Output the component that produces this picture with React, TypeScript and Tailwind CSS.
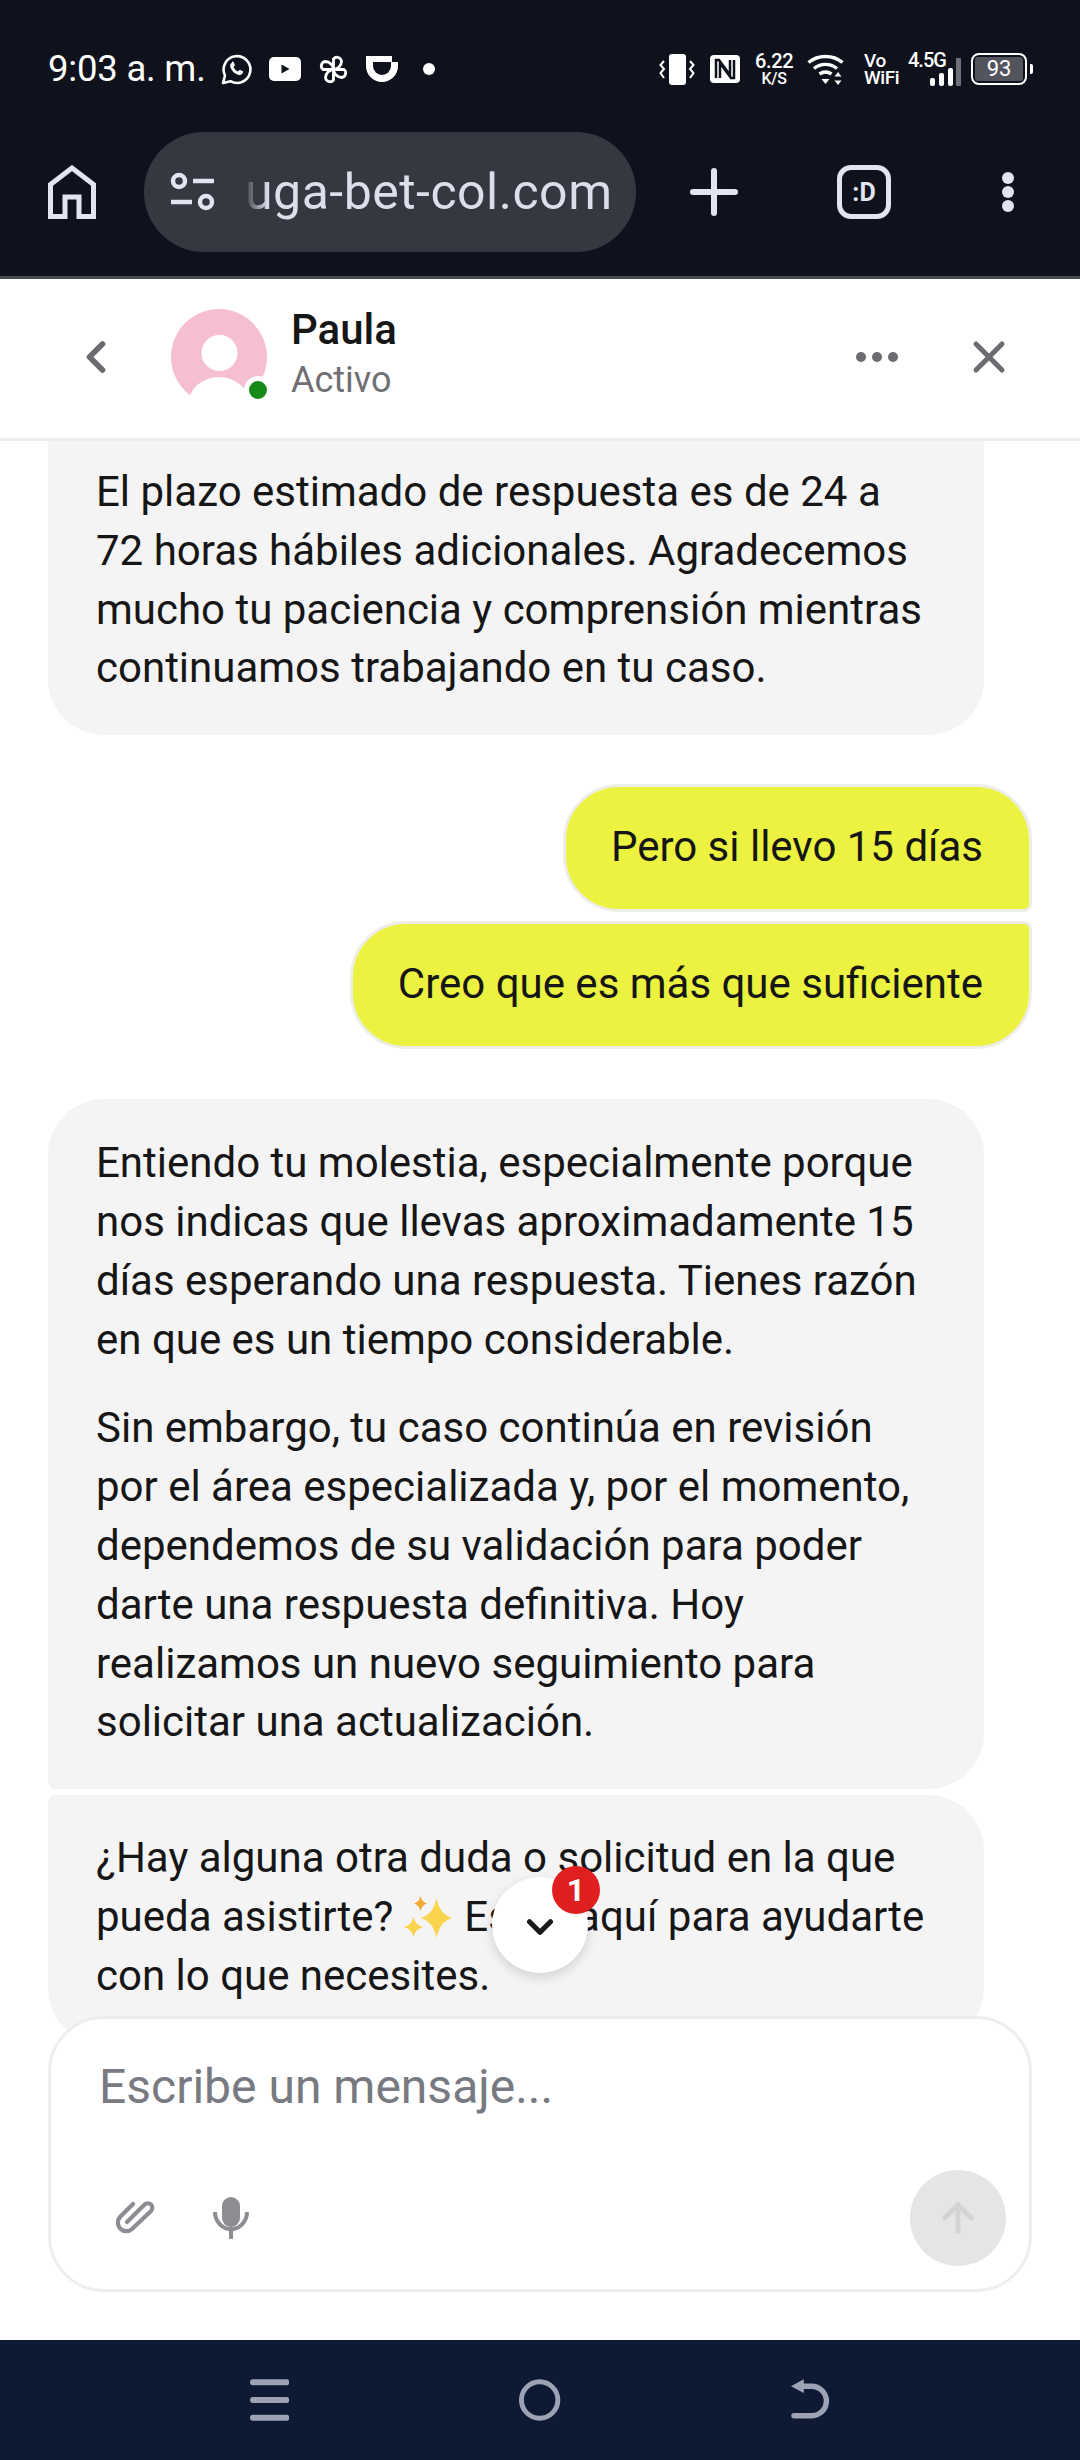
import { X, ChevronLeft, ChevronDown, ArrowUp } from 'lucide-react';

const roboto = "font-['Roboto',sans-serif]";

function WhatsAppIcon() {
  return (
    <svg width="31" height="31" viewBox="0 0 31 31" fill="none" className="text-white">
      <path d="M2 29l2-7.500A13.400 13.400 0 1 1 9.400 27.200L2 29z" stroke="currentColor" strokeWidth="2.600" strokeLinejoin="round" />
      <path d="M11 8.500c-1.500 1-2.300 2.800-1.500 5 1.200 3.300 4 6 7.300 7.200 2.300.8 4 0 5-1.600l.4-1.600-3.500-1.800-1.700 1.700c-2-.8-3.600-2.400-4.500-4.400l1.500-1.700-1.600-3.500-1.400-.3z" fill="currentColor" />
    </svg>
  );
}

function YoutubeIcon() {
  return (
    <svg width="32" height="24" viewBox="0 0 32 24">
      <rect width="32" height="24" rx="5" fill="white" />
      <path d="M12.500 7.500v9l8-4.500z" fill="#0f121c" />
    </svg>
  );
}

function PinwheelIcon() {
  return (
    <svg width="31" height="31" viewBox="0 0 31 31" fill="none" stroke="white" strokeWidth="2.800" strokeLinejoin="round">
      <path d="M15.500 15.500V5a4.500 4.500 0 0 1 8 2.500c0 4-4 8-8 8z" />
      <path d="M15.500 15.500H26a4.500 4.500 0 0 1-2.500 8c-4 0-8-4-8-8z" />
      <path d="M15.500 15.500V26a4.500 4.500 0 0 1-8-2.500c0-4 4-8 8-8z" />
      <path d="M15.500 15.500H5a4.500 4.500 0 0 1 2.500-8c4 0 8 4 8 8z" />
    </svg>
  );
}

function CupIcon() {
  return (
    <svg width="32" height="26" viewBox="0 0 32 26">
      <path d="M0 0H26V6H32V10A16 16 0 0 1 0 10Z" fill="white" />
      <path d="M7 6H25V10A9 9 0 0 1 7 10Z" fill="#0f121c" />
    </svg>
  );
}

function VibrateIcon() {
  return (
    <svg width="36" height="31" viewBox="0 0 36 31" fill="none">
      <rect x="10" y="0" width="17" height="31" rx="3" fill="white" />
      <path d="M5 7L1.500 11 5 15 1.500 19 5 24" stroke="white" strokeWidth="2" />
      <path d="M31 7l3.500 4L31 15l3.500 4L31 24" stroke="white" strokeWidth="2" />
    </svg>
  );
}

function NfcIcon() {
  return (
    <svg width="30" height="28" viewBox="0 0 30 28">
      <rect width="30" height="28" rx="4" fill="white" />
      <path d="M6 23V5h3l11 15V5M24 5v18h-3L10 8v15" fill="none" stroke="#0f121c" strokeWidth="2.500" />
    </svg>
  );
}

function WifiIcon() {
  return (
    <svg width="38" height="32" viewBox="0 0 38 32" fill="none" stroke="white" strokeWidth="3.400">
      <path d="M1.500 9.500C11 1.500 26 1.500 35.500 9.500" />
      <path d="M7 15.500c7-5.500 16-5.500 23 0" />
      <path d="M12.500 21c4-2.800 8-2.800 12 0" />
      <path d="M14.500 26h8L18.500 31z" fill="white" stroke="none" />
      <path d="M31 19l3.500 4.500h-7zM31 32l3.500-4.500h-7z" fill="white" stroke="none" />
    </svg>
  );
}

function SignalBars() {
  return (
    <svg width="31" height="28" viewBox="0 0 31 28" fill="white">
      <rect x="0" y="20" width="5" height="8" rx="2" />
      <rect x="9" y="15" width="5" height="13" rx="2" />
      <rect x="18" y="10" width="5" height="18" rx="2" />
      <rect x="26" y="0" width="5" height="28" rx="1" fill="#6f717a" />
    </svg>
  );
}

function StatusBar() {
  return (
    <div className={`h-[132px] flex items-start justify-between pt-[51px] pl-[48px] pr-[47px] text-white ${roboto}`}>
      <div className="flex items-center h-[36px]">
        <span className="text-[36.500px] leading-[36px] tracking-[-0.2px]">9:03 a. m.</span>
        <div className="flex items-center ml-[15px] gap-[17px]">
          <WhatsAppIcon />
          <YoutubeIcon />
          <PinwheelIcon />
          <CupIcon />
          <span className="w-[12px] h-[12px] rounded-full bg-white ml-[8px]" />
        </div>
      </div>
      <div className="flex items-center h-[36px]">
        <VibrateIcon />
        <div className="ml-[15px]"><NfcIcon /></div>
        <div className="ml-[14px] w-[40px] flex flex-col items-center font-medium">
          <span className="text-[20px] leading-[19px] tracking-[-0.3px]">6.22</span>
          <span className="text-[16px] leading-[15px] tracking-[-0.2px]">K/S</span>
        </div>
        <div className="ml-[13px]"><WifiIcon /></div>
        <div className="ml-[19px] flex flex-col font-medium">
          <span className="text-[19px] leading-[17px] tracking-[-0.5px]">Vo</span>
          <span className="text-[19px] leading-[17px] tracking-[-0.5px]">WiFi</span>
        </div>
        <div className="ml-[9px] relative w-[63px] h-[34px]">
          <span className="absolute left-0 top-[-2px] text-[20px] leading-[20px] font-medium tracking-[-1px]">4.5G</span>
          <div className="absolute right-[10px] bottom-0"><SignalBars /></div>
        </div>
        <div className="flex items-center">
          <div className="w-[56px] h-[32px] rounded-[8px] border-2 border-white p-[2px]">
            <div className="w-full h-full bg-[#53555e] rounded-[3px] flex items-center justify-center text-[22px] leading-none">93</div>
          </div>
          <div className="w-[3px] h-[10px] bg-white ml-[3px] rounded-r-[2px]" />
        </div>
      </div>
    </div>
  );
}

function BrowserBar() {
  return (
    <div className="h-[147px] bg-[#0f121c] border-b-[3px] border-[#4a4c55] flex items-start pl-[48px] relative">
      <svg width="48" height="54" viewBox="0 0 48 54" fill="none" className="mt-[33px]" stroke="#e2e4f0" strokeWidth="5">
        <path d="M2.500 51.500V19.500L24 3 45.500 19.500V51.500H31V32H17V51.500z" />
      </svg>
      <div className={`ml-[48px] w-[492px] h-[120px] rounded-full bg-[#353741] flex items-center relative ${roboto}`}>
        <svg width="46" height="40" viewBox="0 0 46 40" fill="none" className="ml-[26px]" stroke="#e2e4f0" strokeWidth="4.500">
          <circle cx="9" cy="9" r="6" />
          <path d="M23 9h21" />
          <path d="M1 30h21" />
          <circle cx="36" cy="30" r="6" />
        </svg>
        <span className="ml-[29px] text-[50px] leading-none text-[#dcdee9] tracking-[0.5px] whitespace-nowrap">uga-bet-col.com</span>
        <div className="absolute left-[100px] top-[30px] h-[60px] w-[24px] bg-gradient-to-r from-[#353741] to-transparent" />
      </div>
      <svg width="48" height="48" viewBox="0 0 48 48" className="mt-[36px] ml-[54px]" stroke="#e2e4f0" strokeWidth="6" strokeLinecap="round">
        <path d="M24 3v42M3 24h42" />
      </svg>
      <div className={`mt-[33px] ml-[99px] w-[54px] h-[54px] rounded-[14px] border-[5px] border-[#e2e4f0] flex items-center justify-center text-[#e2e4f0] text-[25px] font-bold leading-none ${roboto}`}>
        :D
      </div>
      <div className="mt-[40px] ml-[111px] flex flex-col gap-[2px]">
        <span className="w-[12px] h-[12px] rounded-full bg-[#e2e4f0]" />
        <span className="w-[12px] h-[12px] rounded-full bg-[#e2e4f0]" />
        <span className="w-[12px] h-[12px] rounded-full bg-[#e2e4f0]" />
      </div>
    </div>
  );
}

function Avatar() {
  return (
    <div className="relative w-[96px] h-[96px]">
      <svg width="96" height="96" viewBox="0 0 96 96">
        <circle cx="48" cy="48" r="48" fill="#f5bfcf" />
        <circle cx="48.500" cy="44" r="18" fill="white" />
        <ellipse cx="48" cy="96" rx="31" ry="28" fill="white" />
      </svg>
      <span className="absolute left-[73px] top-[67px] w-[28px] h-[28px] rounded-full bg-[#168a17] border-[5px] border-white" />
    </div>
  );
}

function Header() {
  return (
    <div className={`h-[162px] bg-white border-b-[3px] border-[#eeeeee] flex items-center relative z-20 pl-[70px] pr-[65px] pb-[3px] ${roboto}`}>
      <ChevronLeft size={52} strokeWidth={2.600} className="text-[#6b6b70]" />
      <div className="ml-[49px]"><Avatar /></div>
      <div className="ml-[24px] mb-[4px] flex flex-col">
        <span className="text-[42px] leading-[50px] font-medium text-[#161616]">Paula</span>
        <span className="text-[36px] leading-[50px] text-[#6f6f74]">Activo</span>
      </div>
      <div className="ml-auto flex items-center gap-[6px]">
        <span className="w-[10px] h-[10px] rounded-full bg-[#6b6b70]" />
        <span className="w-[10px] h-[10px] rounded-full bg-[#6b6b70]" />
        <span className="w-[10px] h-[10px] rounded-full bg-[#6b6b70]" />
      </div>
      <X size={52} strokeWidth={2.300} className="text-[#6b6b70] ml-[65px]" />
    </div>
  );
}

function Sparkles() {
  return (
    <svg width="48" height="44" viewBox="0 0 48 44" className="inline-block align-[-7px] mr-[2px]">
      <path d="M32.500 4Q35.500 20 48 24Q35.500 28 32.500 44Q29.500 28 17 24Q29.500 20 32.500 4z" fill="#fbd44e" />
      <path d="M16.500 2Q17.800 8 23 9.500Q17.800 11 16.500 17Q15.200 11 10 9.500Q15.200 8 16.500 2z" fill="#f2ab2e" />
      <path d="M9.500 23Q11.400 31 19 33Q11.400 35 9.500 43Q7.600 35 0 33Q7.600 31 9.500 23z" fill="#fbd44e" />
    </svg>
  );
}

function UserBubble({ text, corner }: { text: string; corner: string }) {
  return (
    <div className={`self-end h-[128px] flex items-center pl-[45px] pr-[46px] pb-[2px] bg-[#ebf240] border-[3px] border-[#eeeee6] text-[#161616] rounded-[56px] ${corner}`}>
      {text}
    </div>
  );
}

function Messages() {
  return (
    <div className="h-[1640px] overflow-hidden flex flex-col px-[48px] text-[42px] leading-[58.8px] text-[#161616]">
      <div className="w-[936px] bg-[#f4f4f4] rounded-b-[56px] pt-[22px] pb-[37px] px-[48px] shrink-0">
        El plazo estimado de respuesta es de 24 a 72 horas hábiles adicionales. Agradecemos mucho tu paciencia y comprensión mientras continuamos trabajando en tu caso.
      </div>
      <div className="mt-[49px] flex flex-col gap-[9px] shrink-0">
        <UserBubble text="Pero si llevo 15 días" corner="rounded-br-[8px]" />
        <UserBubble text="Creo que es más que suficiente" corner="rounded-tr-[8px]" />
      </div>
      <div className="mt-[50px] w-[936px] bg-[#f4f4f4] rounded-[56px] rounded-bl-[8px] pt-[35px] pb-[37px] px-[48px] shrink-0">
        <p>Entiendo tu molestia, especialmente porque nos indicas que llevas aproximadamente 15 días esperando una respuesta. Tienes razón en que es un tiempo considerable.</p>
        <p className="mt-[30px]">Sin embargo, tu caso continúa en revisión por el área especializada y, por el momento, dependemos de su validación para poder darte una respuesta definitiva. Hoy realizamos un nuevo seguimiento para solicitar una actualización.</p>
      </div>
      <div className="mt-[6px] w-[936px] bg-[#f4f4f4] rounded-[56px] rounded-tl-[8px] pt-[34px] pb-[38px] px-[48px] shrink-0">
        ¿Hay alguna otra duda o solicitud en la que pueda asistirte? <Sparkles /> Estoy aquí para ayudarte con lo que necesites.
      </div>
    </div>
  );
}

function ScrollButton() {
  return (
    <div className="absolute left-[492px] top-[1877px] w-[96px] h-[96px] rounded-full bg-white shadow-[0_4px_12px_rgba(0,0,0,0.15)] flex items-center justify-center z-30">
      <ChevronDown size={42} strokeWidth={3} className="text-[#1a1a1a] mt-[4px]" />
      <span className={`absolute left-[60px] top-[-11px] w-[48px] h-[48px] rounded-full bg-[#e02020] text-white text-[32px] font-bold flex items-center justify-center ${roboto}`}>
        1
      </span>
    </div>
  );
}

function ClipIcon() {
  return (
    <svg width="44" height="36" viewBox="0 0 44 36" fill="none" stroke="#8b8d92" strokeWidth="4.200" strokeLinecap="round">
      <path d="M19 3L6 16a8.500 8.500 0 0 0 12 12L37 10a4.500 4.500 0 0 0-6.400-6.400L13 21" />
    </svg>
  );
}

function MicIcon() {
  return (
    <svg width="36" height="42" viewBox="0 0 36 42" fill="none">
      <rect x="9" y="0" width="18" height="30" rx="9" fill="#8b8d92" />
      <path d="M2 15a16 17 0 0 0 32 0" stroke="#8b8d92" strokeWidth="4" />
      <path d="M18 32v10" stroke="#8b8d92" strokeWidth="4" />
    </svg>
  );
}

function Composer() {
  return (
    <div className="relative z-10 -mt-[65px] px-[48px] h-[324px]">
      <div className="h-[276px] bg-white rounded-[56px] border-[3px] border-[#eeeeee] pl-[48px] pr-[23px] flex flex-col">
        <div className="mt-[40px] text-[48px] leading-[56px] text-[#777a80]">Escribe un mensaje...</div>
        <div className="mt-auto mb-[23px] flex items-center">
          <div className="ml-[15px] mt-[2px]"><ClipIcon /></div>
          <div className="ml-[55px]"><MicIcon /></div>
          <div className="ml-auto w-[96px] h-[96px] rounded-full bg-[#e5e5e5] flex items-center justify-center">
            <ArrowUp size={46} strokeWidth={2.500} className="text-[#d3d3d3]" />
          </div>
        </div>
      </div>
    </div>
  );
}

function NavBar() {
  return (
    <div className="h-[120px] bg-[#0e1a33] flex items-start justify-center pt-[39px] relative">
      <div className="flex items-start w-[580px]">
        <svg width="40" height="42" viewBox="0 0 40 42" fill="#9ca3b4">
          <rect width="40" height="6" rx="3" />
          <rect y="18" width="40" height="6" rx="3" />
          <rect y="36" width="40" height="6" rx="3" />
        </svg>
        <svg width="42" height="42" viewBox="0 0 42 42" fill="none" stroke="#9ca3b4" strokeWidth="5" className="ml-[230px]">
          <circle cx="21" cy="21" r="18.500" />
        </svg>
        <svg width="40" height="42" viewBox="0 0 40 42" fill="none" className="ml-[230px]">
          <path d="M8 7h13a15 15 0 0 1 0 30H3" stroke="#9ca3b4" strokeWidth="5.500" strokeLinecap="round" />
          <path d="M0 7L13 0V14z" fill="#9ca3b4" />
        </svg>
      </div>
    </div>
  );
}

export default function App() {
  return (
    <div className={`w-[1080px] h-[2460px] overflow-hidden bg-white flex flex-col relative ${roboto}`}>
      <div className="bg-[#0f121c]">
        <StatusBar />
        <BrowserBar />
      </div>
      <Header />
      <Messages />
      <Composer />
      <NavBar />
      <ScrollButton />
    </div>
  );
}
